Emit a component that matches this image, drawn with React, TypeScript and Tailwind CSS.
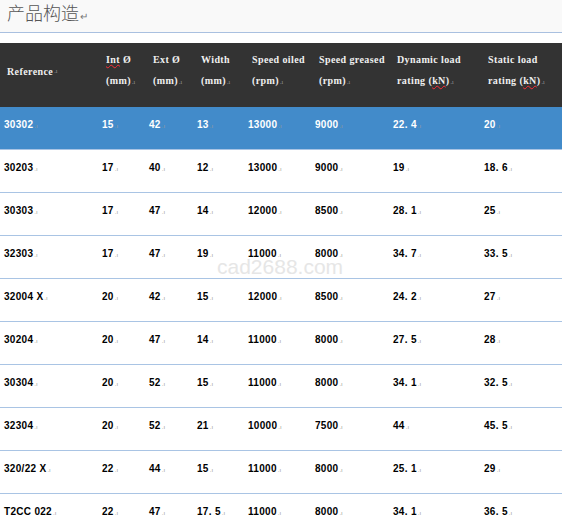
import React from "react";

const cols = "grid grid-cols-[98px_47px_48px_51px_67px_78px_91px_1fr]";

const rows: string[][] = [
  ["30203", "17", "40", "12", "13000", "9000", "19", "18.6"],
  ["30303", "17", "47", "14", "12000", "8500", "28.1", "25"],
  ["32303", "17", "47", "19", "11000", "8000", "34.7", "33.5"],
  ["32004 X", "20", "42", "15", "12000", "8500", "24.2", "27"],
  ["30204", "20", "47", "14", "11000", "8000", "27.5", "28"],
  ["30304", "20", "52", "15", "11000", "8000", "34.1", "32.5"],
  ["32304", "20", "52", "21", "10000", "7500", "44", "45.5"],
  ["320/22 X", "22", "44", "15", "11000", "8000", "25.1", "29"],
  ["T2CC 022", "22", "47", "17.5", "11000", "8000", "34.1", "36.5"],
];

const fmt = (v: string) => v.replace(".", ". ");

const Mark = () => (
  <span className="text-[6px] text-[#9a9a9a] font-normal align-baseline ml-[1px] tracking-normal">.ı</span>
);

const HeadCell = ({ l1, l2 }: { l1: React.ReactNode; l2?: React.ReactNode }) => (
  <div className="pl-[8px] flex flex-col justify-center pb-[8px] leading-[21px]">
    <div className="whitespace-nowrap">{l1}</div>
    {l2 && <div className="whitespace-nowrap">{l2}</div>}
  </div>
);

export default function App() {
  return (
    <div className="w-[562px] h-[527px] bg-white overflow-hidden relative">
      <div className="bg-[#f9f9f9] h-[33px] pl-[7px] border-b border-[#a9c0e0]">
        <span
          className="text-[18px] leading-[24px] text-[#555] font-light"
          style={{ fontFamily: '"Noto Sans CJK SC", sans-serif' }}
        >
          产品构造
        </span>
        <span className="text-[10px] text-[#777] ml-[1px]">↵</span>
      </div>
      <div className="h-[10px]" />
      <div
        className={`${cols} bg-[#333333] h-[64px] text-[#f0f0f0] text-[10px] font-bold tracking-[0.4px]`}
        style={{ fontFamily: '"Liberation Serif", serif' }}
      >
        <div className="pl-[7px] flex items-center pb-[8px]">
          <span>Reference</span>
          <Mark />
        </div>
        <HeadCell
          l1={<><span className="underline decoration-wavy decoration-red-500">Int</span> Ø</>}
          l2={<>(mm)<Mark /></>}
        />
        <HeadCell l1={<>Ext Ø</>} l2={<>(mm)<Mark /></>} />
        <HeadCell l1={<>Width</>} l2={<>(mm)<Mark /></>} />
        <HeadCell l1={<>Speed oiled</>} l2={<>(rpm)<Mark /></>} />
        <HeadCell l1={<>Speed greased</>} l2={<>(rpm)<Mark /></>} />
        <HeadCell
          l1={<>Dynamic load</>}
          l2={<>rating (<span className="underline decoration-wavy decoration-red-500">kN</span>)<Mark /></>}
        />
        <HeadCell
          l1={<>Static load</>}
          l2={<>rating (<span className="underline decoration-wavy decoration-red-500">kN</span>)<Mark /></>}
        />
      </div>
      <div
        className={`${cols} bg-[#428bca] h-[43px] text-white text-[10px] font-bold border-b border-[#a9c4e4] tracking-[0.3px]`}
        style={{ fontFamily: '"Liberation Sans", sans-serif' }}
      >
        {["30302", "15", "42", "13", "13000", "9000", "22.4", "20"].map((v, i) => (
          <div key={i} className="pl-[4px] pt-[10px] leading-[16px] whitespace-pre">
            {fmt(v)}
            <Mark />
          </div>
        ))}
      </div>
      {rows.map((r, ri) => (
        <div
          key={ri}
          className={`${cols} h-[43px] text-black text-[10px] font-bold border-b border-[#a9c4e4] tracking-[0.3px]`}
          style={{ fontFamily: '"Liberation Sans", sans-serif' }}
        >
          {r.map((v, i) => (
            <div key={i} className="pl-[4px] pt-[10px] leading-[16px] whitespace-pre">
              {fmt(v)}
              <Mark />
            </div>
          ))}
        </div>
      ))}
      <div
        className="absolute left-[217px] top-[251px] text-[21px] text-[#e6e6e6] pointer-events-none"
        style={{ fontFamily: '"Liberation Sans", sans-serif' }}
      >
        cad2688.com
      </div>
    </div>
  );
}
